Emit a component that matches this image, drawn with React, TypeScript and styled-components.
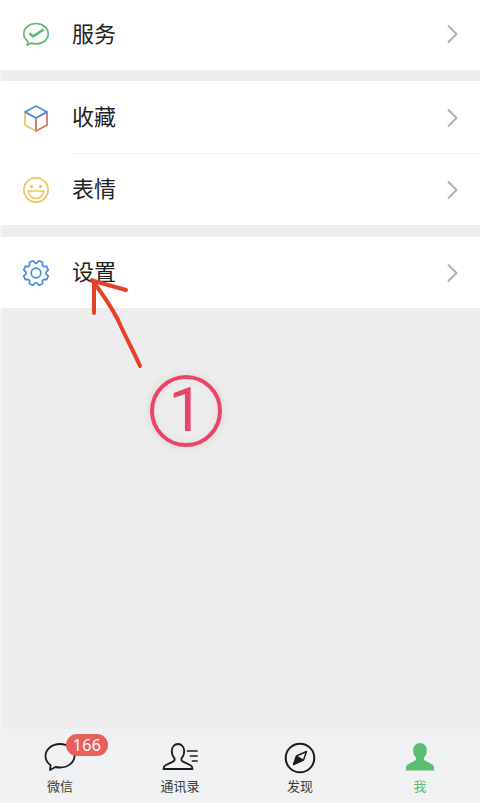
import { ReactNode } from "react";
import styled, { createGlobalStyle } from "styled-components";

const GlobalStyle = createGlobalStyle`
  html, body {
    margin: 0;
    padding: 0;
    background: #ededed;
    font-family: "Noto Sans CJK SC", "Noto Sans", sans-serif;
  }
`;

const ServiceIcon = () => (
  <svg width="28" height="28" viewBox="0 0 28 28" fill="none">
    <path
      d="M14 3.500c-6.800 0-12.200 4.500-12.200 10.300 0 3.200 1.600 5.900 4.100 7.800l-.7 3.700 4.200-2.200c1.500.5 3 .8 4.600.8 6.800 0 12.200-4.300 12.200-10.100S20.800 3.500 14 3.500Z"
      stroke="#5dbb73"
      strokeWidth="1.700"
      strokeLinejoin="round"
    />
    <path d="M7.300 13.200 11 16.300 21.800 9.500" stroke="#5dbb73" strokeWidth="2.600" strokeLinejoin="round" />
  </svg>
);

const CubeIcon = () => (
  <svg width="28" height="28" viewBox="0 0 28 28" fill="none" strokeWidth="1.800" strokeLinejoin="round" strokeLinecap="round">
    <path d="M3 8 14 14 14 27 3 21Z" stroke="#efc35c" />
    <path d="M25 8 14 14 14 27 25 21Z" stroke="#dc7070" />
    <path d="M14 2 25 8 14 14 3 8Z" stroke="#4a90dc" />
  </svg>
);

const SmileIcon = () => (
  <svg width="28" height="28" viewBox="0 0 28 28" fill="none">
    <circle cx="14" cy="14" r="12.100" stroke="#efc35c" strokeWidth="1.700" />
    <circle cx="9.500" cy="10.500" r="1.600" fill="#efc35c" />
    <circle cx="18.500" cy="10.500" r="1.600" fill="#efc35c" />
    <path
      d="M6.500 15h15c0 4.500-3.300 7.500-7.500 7.500S6.500 19.500 6.500 15Z"
      stroke="#efc35c"
      strokeWidth="1.700"
      strokeLinejoin="round"
    />
  </svg>
);

// eight flat teeth round the centre of a 28 box
const gearPath = () => {
  const at = (r: number, a: number) =>
    `${(14 + r * Math.cos(a)).toFixed(2)} ${(14 + r * Math.sin(a)).toFixed(2)}`;
  let d = "";
  for (let i = 0; i < 8; i++) {
    const c = (i * Math.PI) / 4 + Math.PI / 8;
    d += `${i === 0 ? "M" : "L"}${at(10, c - 0.3)} L${at(12.6, c - 0.16)} L${at(12.6, c + 0.16)} L${at(10, c + 0.3)} `;
  }
  return d + "Z";
};

const GearIcon = () => (
  <svg width="28" height="28" viewBox="0 0 28 28" fill="none" stroke="#4a8ddb" strokeWidth="1.700" strokeLinejoin="round">
    <path d={gearPath()} />
    <circle cx="14" cy="14" r="4.800" />
  </svg>
);

const ChatIcon = () => (
  <svg width="32" height="30" viewBox="0 0 32 30" fill="none" stroke="#1c1c1c" strokeWidth="1.800" strokeLinejoin="round">
    <path d="M16 2C8 2 1.500 7.200 1.500 14c0 3.700 2 7 5.100 9.200l-.6 4.800 5.500-3c1.400.3 3 .5 4.500.5 8 0 14.500-5.200 14.500-11.500S24 2 16 2Z" />
  </svg>
);

const ContactsIcon = () => (
  <svg width="36" height="30" viewBox="0 0 36 30" fill="none" stroke="#1c1c1c" strokeWidth="1.800" strokeLinejoin="round" strokeLinecap="round">
    <path d="M16 2C12.400 2 9.800 5 9.800 9 9.800 12 10.800 14.500 12.300 16 13 17.500 12.600 18.800 11 19.600L3.500 23.200C2 24 1.500 25.300 1.500 27L30.500 27C30.500 25.300 30 24 28.500 23.200L21 19.600C19.400 18.800 19 17.500 19.700 16 21.200 14.500 22.200 12 22.200 9 22.200 5 19.600 2 16 2Z" />
    <path d="M25.500 9h9.500M28.500 14h6.500M30.500 19h4.500" strokeWidth="1.700" />
  </svg>
);

const CompassIcon = () => (
  <svg width="32" height="32" viewBox="0 0 32 32" fill="none" stroke="#1c1c1c" strokeWidth="2" strokeLinejoin="round">
    <circle cx="16" cy="16" r="14.300" />
    <path d="M22.500 9.500 19.500 18 9.500 22.500 12.500 14Z" strokeWidth="1.500" />
    <path d="M9.500 22.500 12.500 14 19.500 18Z" fill="#1c1c1c" strokeWidth="1" />
  </svg>
);

const MeIcon = () => (
  <svg width="30" height="30" viewBox="0 0 30 30">
    <path
      d="M15 1c-4 0-6.800 3.200-6.800 7.500 0 3 1 5.300 2.600 7 .8 1.300.3 2.500-1.200 3.300l-7.300 4C.8 23.700 1 26 1 28.500h28c0-2.500.2-4.800-1.300-5.700l-7.300-4c-1.500-.8-2-2-1.200-3.300 1.600-1.700 2.600-4 2.600-7C21.800 4.200 19 1 15 1Z"
      fill="#5bbd72"
    />
  </svg>
);

const Page = styled.div`
  position: relative;
  width: 480px;
  height: 803px;
  overflow: hidden;
  display: flex;
  flex-direction: column;
  background: linear-gradient(90deg, #f4f4f4 2px, #ededed 2px);
`;

const Group = styled.section<{ $gap: number; $trail?: number }>`
  background: #fff;
  margin-bottom: ${(p) => p.$gap}px;
  padding-bottom: ${(p) => p.$trail ?? 0}px;
`;

const Row = styled.div<{ $height: number; $divider?: boolean }>`
  position: relative;
  height: ${(p) => p.$height}px;
  box-sizing: border-box;
  padding: 0 22px;
  display: flex;
  align-items: center;

  ${(p) =>
    p.$divider &&
    `&::after {
      content: "";
      position: absolute;
      left: 73px;
      right: 0;
      bottom: 0;
      height: 1px;
      background: #f2f2f2;
    }`}
`;

const IconSlot = styled.div`
  width: 28px;
  height: 28px;
  margin-right: 22px;
  flex: none;
  display: flex;
`;

const RowLabel = styled.span`
  flex: 1;
  padding-bottom: 5px;
  font-size: 22px;
  line-height: 30px;
  color: #222;
`;

const Chevron = styled.svg`
  width: 12px;
  height: 20px;
  fill: none;
  stroke: #b0b0b0;
  stroke-width: 2;
`;

const TabBar = styled.nav`
  margin-top: auto;
  height: 74px;
  background: #f0f1f3;
  display: grid;
  grid-template-columns: repeat(4, 120px);
`;

const Tab = styled.div`
  position: relative;
  display: flex;
  flex-direction: column;
  align-items: center;
  padding-top: 13px;
`;

const TabIcon = styled.div`
  height: 30px;
  display: flex;
  align-items: flex-start;
`;

const TabLabel = styled.span<{ $active?: boolean }>`
  margin-top: 5px;
  font-size: 13px;
  line-height: 18px;
  color: ${(p) => (p.$active ? "#5bbd72" : "#3a3a3a")};
`;

const Badge = styled.span`
  position: absolute;
  left: 66px;
  top: 5px;
  width: 42px;
  height: 22px;
  border-radius: 11px;
  background: #e8605a;
  color: #fff;
  font-family: "Noto Sans", sans-serif;
  font-size: 16px;
  line-height: 22px;
  letter-spacing: 0.3px;
  text-align: center;
`;

const ArrowMark = styled.svg`
  position: absolute;
  left: 85px;
  top: 272px;
  width: 60px;
  height: 100px;
  overflow: visible;
  fill: none;
  stroke: #e5402a;
  stroke-width: 4;
  stroke-linecap: round;
  stroke-linejoin: round;
`;

const StepMark = styled.div`
  position: absolute;
  left: 150px;
  top: 375px;
  width: 72px;
  height: 72px;
  box-sizing: border-box;
  border: 4px solid #ea4568;
  border-radius: 50%;
  box-shadow: 0 0 10px rgba(0, 0, 0, 0.1), inset 0 0 8px rgba(0, 0, 0, 0.06);
  color: #ea4568;
  font-family: "Roboto", sans-serif;
  font-size: 62px;
  line-height: 62px;
  text-align: center;
`;

const menu: { label: string; icon: ReactNode; height: number; divider?: boolean; group: number }[] = [
  { label: "服务", icon: <ServiceIcon />, height: 68, group: 0 },
  { label: "收藏", icon: <CubeIcon />, height: 73, divider: true, group: 1 },
  { label: "表情", icon: <SmileIcon />, height: 71, group: 1 },
  { label: "设置", icon: <GearIcon />, height: 71, group: 2 },
];

const groups = [
  { gap: 11, trail: 2 },
  { gap: 12 },
  { gap: 0 },
];

function MenuRow({ label, icon, height, divider }: { label: string; icon: ReactNode; height: number; divider?: boolean }) {
  return (
    <Row $height={height} $divider={divider}>
      <IconSlot>{icon}</IconSlot>
      <RowLabel>{label}</RowLabel>
      <Chevron viewBox="0 0 12 20">
        <path d="M2 1.500 10.500 10 2 18.500" />
      </Chevron>
    </Row>
  );
}

export default function App() {
  return (
    <Page>
      <GlobalStyle />
      {groups.map((g, i) => (
        <Group key={i} $gap={g.gap} $trail={g.trail}>
          {menu
            .filter((m) => m.group === i)
            .map((m) => (
              <MenuRow key={m.label} {...m} />
            ))}
        </Group>
      ))}
      <TabBar>
        <Tab>
          <TabIcon>
            <ChatIcon />
          </TabIcon>
          <TabLabel>微信</TabLabel>
          <Badge>166</Badge>
        </Tab>
        <Tab>
          <TabIcon>
            <ContactsIcon />
          </TabIcon>
          <TabLabel>通讯录</TabLabel>
        </Tab>
        <Tab>
          <TabIcon>
            <CompassIcon />
          </TabIcon>
          <TabLabel>发现</TabLabel>
        </Tab>
        <Tab>
          <TabIcon>
            <MeIcon />
          </TabIcon>
          <TabLabel $active>我</TabLabel>
        </Tab>
      </TabBar>
      <ArrowMark viewBox="85 272 60 100">
        <path d="M140 366C134 352 126 338 118 320 111 306 101 292 92 280" />
        <path d="M94 313 94 281 126 290" />
      </ArrowMark>
      <StepMark>1</StepMark>
    </Page>
  );
}
